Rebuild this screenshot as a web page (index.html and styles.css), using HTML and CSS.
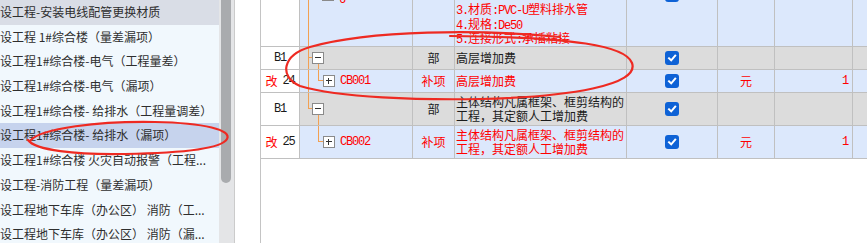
FILE: index.html
```html
<!DOCTYPE html>
<html lang="zh">
<head>
<meta charset="utf-8">
<title>工程量清单</title>
<link rel="stylesheet" href="styles.css">
</head>
<body>
<div class="app">
  <aside class="side">
    <ul class="list">
      <li class="head">设工程-安装电线配管更换材质</li>
      <li>设工程 1#综合楼（量差漏项）</li>
      <li>设工程1#综合楼-电气（工程量差）</li>
      <li>设工程1#综合楼-电气（漏项）</li>
      <li>设工程1#综合楼- 给排水（工程量调差）</li>
      <li class="sel">设工程1#综合楼- 给排水（漏项）</li>
      <li>设工程1#综合楼 火灾自动报警（工程...</li>
      <li>设工程-消防工程（量差漏项）</li>
      <li>设工程地下车库（办公区） 消防（工...</li>
      <li>设工程地下车库（办公区） 消防（漏...</li>
    </ul>
    <div class="scroll"><div class="thumb"></div></div>
  </aside>
  <main class="pane">
    <div class="grid">
      <div class="row blue">
        <div class="c num"></div>
        <div class="c tree t0"><span class="box plus cutbox"></span><span class="code m cut6">6</span></div>
        <div class="c type"></div>
        <div class="c name desc red">
          <div><span class="m">3.</span>材质<span class="m">:PVC-U</span>塑料排水管</div>
          <div><span class="m">4.</span>规格<span class="m">:De50</span></div>
          <div><span class="m">5.</span>连接形式<span class="m">:</span>承插粘接</div>
        </div>
        <div class="c chkc"><span class="chk up"><svg viewBox="0 0 10 10" width="10" height="10"><path d="M2 5.3 L4.2 7.4 L8.2 2.6" /></svg></span></div>
        <div class="c unit"></div>
        <div class="c qty"></div>
        <div class="c last"></div>
      </div>
      <div class="row gray">
        <div class="c num"><span class="m">B1</span></div>
        <div class="c tree t1"><span class="box minus lv1"></span></div>
        <div class="c type">部</div>
        <div class="c name">高层增加费</div>
        <div class="c chkc"><span class="chk"><svg viewBox="0 0 10 10" width="10" height="10"><path d="M2 5.3 L4.2 7.4 L8.2 2.6" /></svg></span></div>
        <div class="c unit"></div>
        <div class="c qty"></div>
        <div class="c last"></div>
      </div>
      <div class="row blue">
        <div class="c num"><span class="red">改</span><span class="m n">24</span></div>
        <div class="c tree t2"><span class="box plus lv2"></span><span class="code m">CB001</span></div>
        <div class="c type red">补项</div>
        <div class="c name red">高层增加费</div>
        <div class="c chkc"><span class="chk"><svg viewBox="0 0 10 10" width="10" height="10"><path d="M2 5.3 L4.2 7.4 L8.2 2.6" /></svg></span></div>
        <div class="c unit red">元</div>
        <div class="c qty red"><span class="m">1</span></div>
        <div class="c last"></div>
      </div>
      <div class="row gray">
        <div class="c num"><span class="m">B1</span></div>
        <div class="c tree t3"><span class="box minus lv1"></span></div>
        <div class="c type">部</div>
        <div class="c name two">主体结构凡属框架、框剪结构的<br>工程，其定额人工增加费</div>
        <div class="c chkc"><span class="chk"><svg viewBox="0 0 10 10" width="10" height="10"><path d="M2 5.3 L4.2 7.4 L8.2 2.6" /></svg></span></div>
        <div class="c unit"></div>
        <div class="c qty"></div>
        <div class="c last"></div>
      </div>
      <div class="row blue">
        <div class="c num"><span class="red">改</span><span class="m n">25</span></div>
        <div class="c tree t4"><span class="box plus lv2"></span><span class="code m">CB002</span></div>
        <div class="c type red">补项</div>
        <div class="c name two red">主体结构凡属框架、框剪结构的<br>工程，其定额人工增加费</div>
        <div class="c chkc"><span class="chk"><svg viewBox="0 0 10 10" width="10" height="10"><path d="M2 5.3 L4.2 7.4 L8.2 2.6" /></svg></span></div>
        <div class="c unit red">元</div>
        <div class="c qty red"><span class="m">1</span></div>
        <div class="c last"></div>
      </div>
    </div>
  </main>
</div>
<svg class="marks" viewBox="0 0 867 243" width="867" height="243">
  <path d="M 560 37 C 480 29, 370 30, 310 47 C 283 55, 278 76, 300 86 C 340 98, 420 100, 480 99 C 570 97, 640 85, 632 63 C 626 46, 575 37, 450 36" />
  <path d="M 30 141 C 40 128, 100 121, 155 122 C 205 123, 232 130, 227 139 C 222 148, 185 153, 125 154 C 75 155, 35 150, 28 140" />
</svg>
</body>
</html>
```
FILE: styles.css
```css
* { box-sizing: border-box; }
html, body { margin: 0; padding: 0; background: #fff; }
body {
  width: 867px;
  height: 243px;
  overflow: hidden;
  position: relative;
  font-family: "Noto Sans CJK SC", "Noto Sans", sans-serif;
  --o: #f2a052;
}
.app { display: flex; height: 243px; }

/* left list */
.side { display: flex; flex: none; width: 235px; border-right: 1px solid #cbcbcb; }
.list {
  list-style: none; margin: 0; padding: 0;
  width: 219px; background: #f1f8fd; overflow: hidden;
}
.list li {
  height: 24.7px; line-height: 24.7px;
  font-size: 12px; color: #2e2e2e;
  white-space: nowrap; overflow: hidden;
}
.list li.head { background: #d9dde6; }
.list li.sel { background: #c6d3ed; }
.scroll { width: 15px; background: #e4e5e7; padding: 0 3px 0 2px; }
.thumb { height: 193px; margin-top: -10px; background: #a9abae; border-radius: 5px; }

/* right table */
.pane { flex: 1; min-width: 0; margin-left: 25px; border-left: 1px solid #c4c4c4; overflow: hidden; }
.grid {
  display: grid;
  grid-template-columns: 38px 112px 41px 171px 90px 56px 77px 40px;
  grid-template-rows: 46px 22px 22px 32px 32px;
  gap: 1px;
  padding-bottom: 1px;
  background: #c0c0c0;
  width: max-content;
}
.row { display: contents; }
.c {
  display: flex; align-items: center;
  font-size: 12px; line-height: 12px;
  white-space: nowrap; overflow: hidden;
  color: #1a1a1a;
}
.blue > .c { background-color: #dce8fc; }
.gray > .c { background-color: #dcdcdc; }
.row > .num { background-color: #fff; justify-content: center; }
.red { color: #ff0000; }
.m { font-family: "Liberation Mono", monospace; font-size: 12px; letter-spacing: -1.2px; }
.n { margin-left: 5px; }

.type, .unit, .chkc { justify-content: center; }
.qty { justify-content: flex-end; padding-right: 4px; }
.name { padding-left: 1px; }
.desc { display: block; padding-top: 3px; line-height: 12.5px; }
.two { white-space: normal; line-height: 14px; }

/* tree */
.tree { background-repeat: no-repeat; }
.t0 {
  background-image: linear-gradient(var(--o), var(--o));
  background-position: 8px 0;
  background-size: 1px 100%;
}
.t1 {
  background-image: linear-gradient(var(--o), var(--o)), linear-gradient(var(--o), var(--o)), linear-gradient(var(--o), var(--o));
  background-position: 8px 0, 8px 10px, 18px 17px;
  background-size: 1px 100%, 4px 1px, 1px 5px;
}
.t2 {
  background-image: linear-gradient(var(--o), var(--o)), linear-gradient(var(--o), var(--o)), linear-gradient(var(--o), var(--o));
  background-position: 8px 0, 18px 0, 18px 10px;
  background-size: 1px 100%, 1px 11px, 5px 1px;
}
.t3 {
  background-image: linear-gradient(var(--o), var(--o)), linear-gradient(var(--o), var(--o)), linear-gradient(var(--o), var(--o));
  background-position: 8px 0, 8px 15px, 18px 22px;
  background-size: 1px 16px, 4px 1px, 1px 10px;
}
.t4 {
  background-image: linear-gradient(var(--o), var(--o)), linear-gradient(var(--o), var(--o));
  background-position: 18px 0, 18px 15px;
  background-size: 1px 16px, 5px 1px;
}
.box {
  flex: none; width: 12px; height: 12px;
  border: 1px solid #8a8a8a;
}
.box.minus { background: linear-gradient(#333, #333) 2px 4px / 6px 1px no-repeat, #fff; }
.box.plus {
  background: linear-gradient(#333, #333) 2px 4px / 6px 1px no-repeat,
              linear-gradient(#333, #333) 4px 2px / 1px 6px no-repeat, #fff;
}
.lv1 { margin-left: 12px; }
.lv2 { margin-left: 23px; }
.cutbox { align-self: flex-start; margin-top: -11px; margin-left: 22px; }
.code { margin-left: 5px; color: #ff0000; }
.cut6 { align-self: flex-start; margin-top: -6px; }

/* checkbox */
.chk {
  width: 14px; height: 14px; border-radius: 3px;
  background: #0e62d6;
  display: flex; align-items: center; justify-content: center;
}
.chk svg path { fill: none; stroke: #fff; stroke-width: 2; stroke-linecap: square; }
.chk.up { align-self: flex-start; margin-top: -12px; }

/* red hand-drawn annotations */
.marks { position: absolute; left: 0; top: 0; pointer-events: none; }
.marks path { fill: none; stroke: #ee2a22; stroke-width: 2.2; stroke-linecap: round; }
```
